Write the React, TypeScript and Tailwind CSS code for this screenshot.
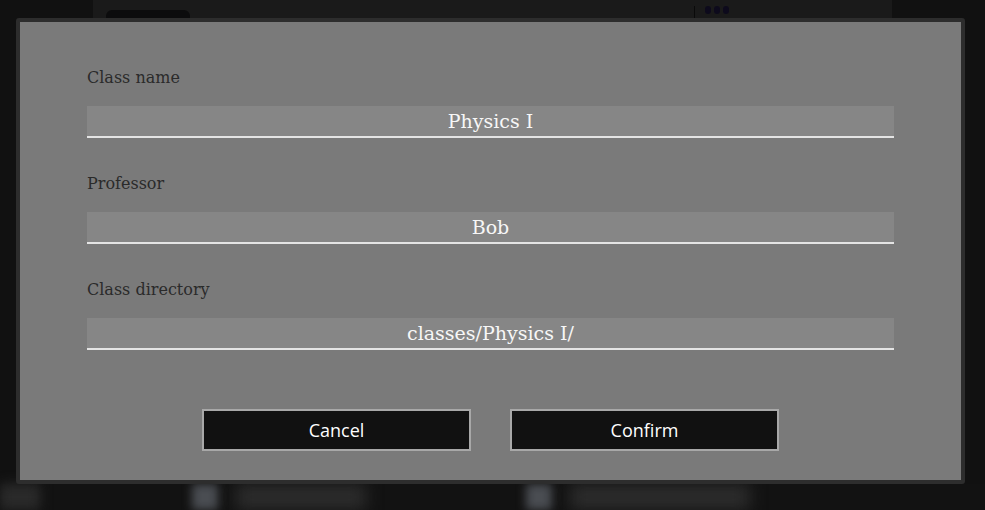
import React from "react";

const serif = { fontFamily: '"DejaVu Serif", "Liberation Serif", serif' };
const sans = { fontFamily: '"Open Sans", "Noto Sans", sans-serif' };

function Field({ label, value }: { label: string; value: string }) {
  return (
    <div className="flex flex-col">
      <div className="h-[24px] leading-[26px] text-[16px] text-[#2a2a2a]" style={serif}>
        {label}
      </div>
      <div
        className="mt-[17px] h-[32px] bg-[#868686] border-b-2 border-[#e4e4e4] flex items-center justify-center text-[19px] text-[#f7f7f7]"
        style={serif}
      >
        {value}
      </div>
    </div>
  );
}

export default function App() {
  return (
    <div className="relative w-[985px] h-[510px] overflow-hidden bg-[#111111]">
      {/* background page */}
      <div className="mx-auto w-[799px] h-full bg-[#1a1a1a] flex flex-col">
        <div className="flex items-start h-[30px] pt-[10px] px-[13px]">
          <div className="w-[84px] h-[20px] rounded-[6px] bg-[#0c0c0d]" />
          <div className="flex-1" />
          <div className="w-px h-[12px] mt-[-4px] bg-[#0a0a0a] mr-[10px]" />
          <div className="flex gap-[3px] mt-[-4px] mr-[150px]">
            <div className="w-[6px] h-[8px] rounded-full bg-[#0d0a1c]" />
            <div className="w-[6px] h-[8px] rounded-full bg-[#0d0a1c]" />
            <div className="w-[6px] h-[8px] rounded-full bg-[#0d0a1c]" />
          </div>
        </div>
      </div>

      {/* bottom blurred content */}
      <div className="absolute left-0 top-[484px] w-[985px] h-[26px] bg-[#121212] flex">
        <div className="w-[40px] h-full bg-[#2a2a2a] blur-[6px]" />
        <div className="ml-[152px] w-[26px] h-full bg-[#4a4d52] blur-[5px]" />
        <div className="ml-[18px] w-[130px] h-full bg-[#2c2c2c] blur-[8px]" />
        <div className="ml-[160px] w-[26px] h-full bg-[#4a4d52] blur-[5px]" />
        <div className="ml-[18px] w-[180px] h-full bg-[#2c2c2c] blur-[8px]" />
      </div>

      {/* modal */}
      <div className="absolute left-[16px] top-[18px] w-[949px] h-[466px] rounded-[3px] border-4 border-[#2d2d2d] bg-[#7a7a7a]">
        <div className="flex flex-col px-[67px] pt-[43px]">
          <Field label="Class name" value="Physics I" />
          <div className="h-[33px]" />
          <Field label="Professor" value="Bob" />
          <div className="h-[33px]" />
          <Field label="Class directory" value="classes/Physics I/" />
          <div className="flex justify-center gap-[39px] mt-[59px]">
            <button
              className="w-[269px] h-[42px] border-2 border-[#a8a8a8] bg-[#111111] text-white text-[18px]"
              style={sans}
            >
              Cancel
            </button>
            <button
              className="w-[269px] h-[42px] border-2 border-[#a8a8a8] bg-[#111111] text-white text-[18px]"
              style={sans}
            >
              Confirm
            </button>
          </div>
        </div>
      </div>
    </div>
  );
}
